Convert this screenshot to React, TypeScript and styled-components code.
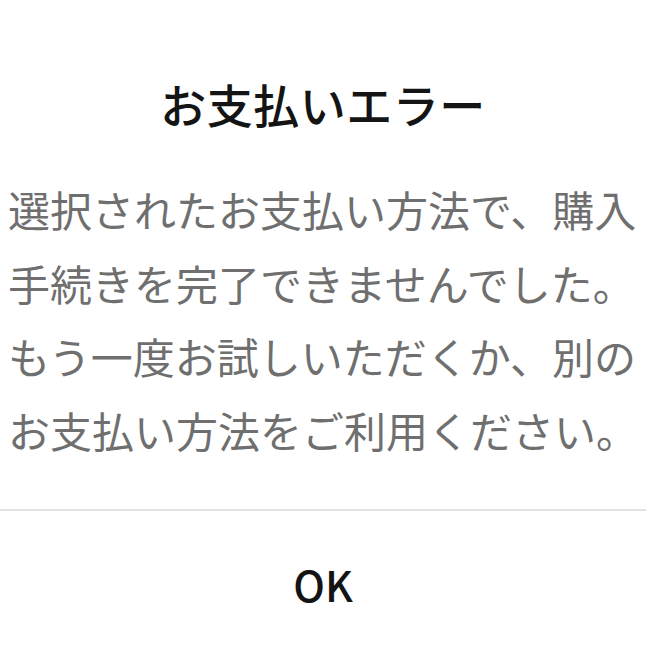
import React from 'react';
import styled, { createGlobalStyle } from 'styled-components';

const GlobalStyle = createGlobalStyle`
  html, body {
    margin: 0;
    padding: 0;
    background: #ffffff;
  }
  body {
    font-family: "Noto Sans CJK JP", "Noto Sans", sans-serif;
  }
`;

const Dialog = styled.div`
  width: 646px;
  height: 646px;
  display: flex;
  flex-direction: column;
  background: #ffffff;
  overflow: hidden;
`;

const Title = styled.h2`
  margin: 0;
  padding-top: 71px;
  font-size: 46px;
  line-height: 64px;
  font-weight: 500;
  color: #141414;
  text-align: center;
  letter-spacing: 0.5px;
`;

const Message = styled.p`
  margin: 37px 0 0;
  padding: 0 8px;
  font-size: 42px;
  line-height: 73.5px;
  font-weight: 400;
  color: #6f6f6f;
  white-space: nowrap;
`;

const Divider = styled.hr`
  margin: 43px 0 0;
  border: none;
  height: 2px;
  background: #e2e2e2;
`;

const ActionButton = styled.button`
  margin: 0;
  padding: 10px 0 0;
  height: 150px;
  border: none;
  background: transparent;
  font-family: "Noto Sans CJK JP", "Noto Sans", sans-serif;
  font-size: 42px;
  font-weight: 500;
  color: #141414;
  cursor: pointer;
`;

const lines = [
  '選択されたお支払い方法で、購入',
  '手続きを完了できませんでした。',
  'もう一度お試しいただくか、別の',
  'お支払い方法をご利用ください。',
];

export default function App() {
  return (
    <>
      <GlobalStyle />
      <Dialog>
        <Title>お支払いエラー</Title>
        <Message>
          {lines.map((l, i) => (
            <React.Fragment key={i}>
              {l}
              {i < lines.length - 1 && <br />}
            </React.Fragment>
          ))}
        </Message>
        <Divider />
        <ActionButton>OK</ActionButton>
      </Dialog>
    </>
  );
}
